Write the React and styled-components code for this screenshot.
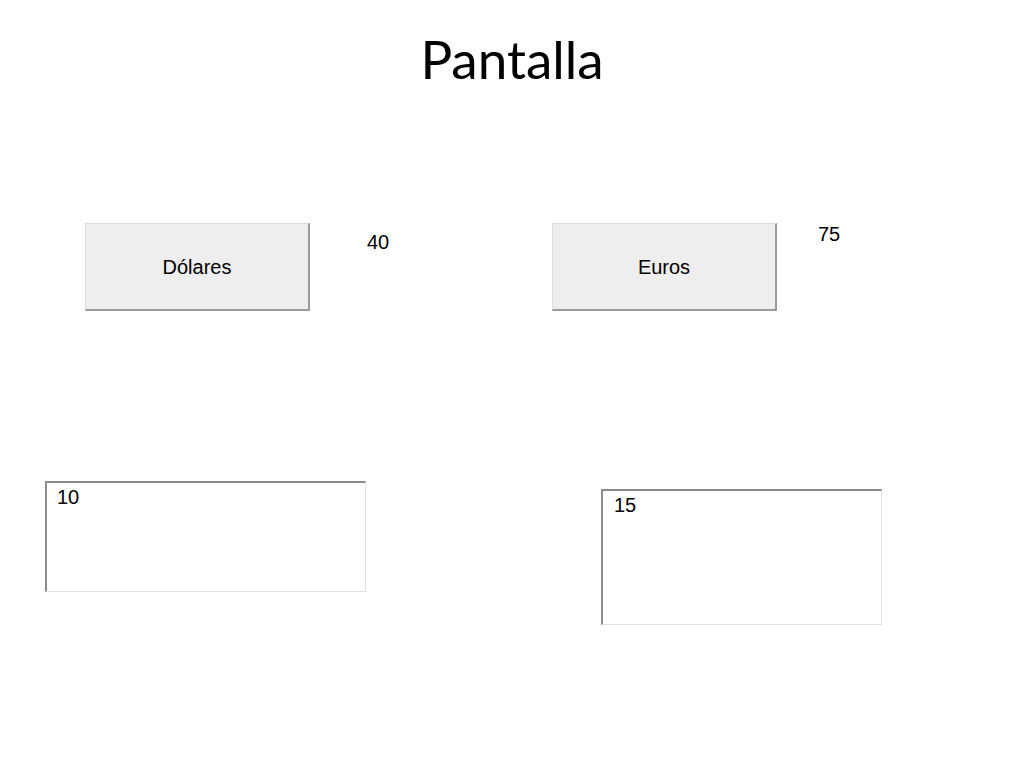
import React from "react";
import styled, { createGlobalStyle } from "styled-components";

const GlobalStyle = createGlobalStyle`
    body {
        margin: 0;
        background: white;
    }
`;

const Slide = styled.div`
    display: flex;
    flex-direction: column;
    width: 1024px;
    height: 768px;
    background: white;
    font-family: "Liberation Sans", Arial, sans-serif;
    color: #000;
`;

const Title = styled.h1`
    margin: 32px 0 0 0;
    height: 53px;
    line-height: 53px;
    text-align: center;
    font-family: Lato, "Open Sans", sans-serif;
    font-weight: normal;
    font-size: 53px;
    color: #000;
`;

const ButtonRow = styled.div`
    display: flex;
    align-items: flex-start;
    margin-top: 138px;
    padding-left: 85px;
`;

const Group = styled.div`
    display: flex;
    align-items: flex-start;
    width: ${(p) => p.$width}px;
`;

const Button = styled.div`
    display: flex;
    justify-content: center;
    align-items: center;
    box-sizing: border-box;
    width: 225px;
    height: 88px;
    background: #eeeeee;
    border-top: 1px solid #dcdcdc;
    border-left: 1px solid #dcdcdc;
    border-right: 2px solid #9a9a9a;
    border-bottom: 2px solid #9a9a9a;
    font-size: 20px;
    line-height: 20px;
`;

const Value = styled.span`
    margin-left: ${(p) => p.$left}px;
    margin-top: ${(p) => p.$top}px;
    font-size: 20px;
    line-height: 20px;
`;

const FieldRow = styled.div`
    display: flex;
    align-items: flex-start;
    margin-top: 170px;
    padding-left: 45px;
`;

const Field = styled.div`
    box-sizing: border-box;
    width: ${(p) => p.$w}px;
    height: ${(p) => p.$h}px;
    margin-left: ${(p) => p.$left || 0}px;
    margin-top: ${(p) => p.$top || 0}px;
    padding: 4px 0 0 ${(p) => p.$pad}px;
    background: white;
    border-top: 2px solid #8c8c8c;
    border-left: 2px solid #8c8c8c;
    border-right: 1px solid #e2e2e2;
    border-bottom: 1px solid #e2e2e2;
    font-size: 20px;
    line-height: 20px;
`;

export default function App() {
    return (
        <Slide>
            <GlobalStyle />
            <Title>Pantalla</Title>
            <ButtonRow>
                <Group $width={467}>
                    <Button>Dólares</Button>
                    <Value $left={57} $top={9}>40</Value>
                </Group>
                <Group $width={300}>
                    <Button>Euros</Button>
                    <Value $left={41} $top={1}>75</Value>
                </Group>
            </ButtonRow>
            <FieldRow>
                <Field $w={321} $h={111} $pad={10}>10</Field>
                <Field $w={281} $h={136} $left={235} $top={8} $pad={11}>15</Field>
            </FieldRow>
        </Slide>
    );
}
